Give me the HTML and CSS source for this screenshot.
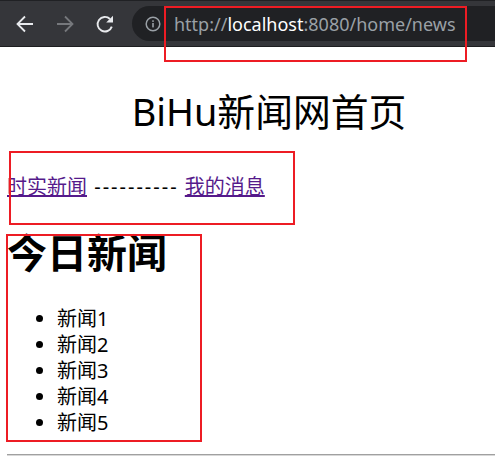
FILE: index.html
```html
<!DOCTYPE html>
<html lang="zh-CN">
<head>
    <meta charset="UTF-8">
    <title>BiHu新闻网首页</title>
    <link rel="stylesheet" href="styles.css">
</head>
<body>
    <div class="toolbar">
        <svg class="nav-icon" viewBox="0 0 20 20" fill="none" stroke="#e8eaed" stroke-width="1.8">
            <path d="M18 10H2.5M10 2.5L2.5 10l7.500 7.500"/>
        </svg>
        <svg class="nav-icon" viewBox="0 0 20 20" fill="none" stroke="#76787c" stroke-width="1.8">
            <path d="M2 10h15.500M10 2.500l7.500 7.500-7.500 7.500"/>
        </svg>
        <svg class="nav-icon" viewBox="0 0 20 20" fill="none" stroke="#e8eaed" stroke-width="1.9">
            <path d="M16.800 12.600A7.300 7.300 0 1 1 15 5"/>
            <path d="M18 1.800v6.800h-6.800z" fill="#e8eaed" stroke="none"/>
        </svg>
        <div class="address">
            <svg class="info-icon" viewBox="0 0 16 16">
                <circle cx="8" cy="8" r="6.800" fill="none" stroke="#9aa0a6" stroke-width="1.500"/>
                <rect x="7.200" y="7" width="1.600" height="4.400" fill="#9aa0a6"/>
                <rect x="7.200" y="4.300" width="1.600" height="1.600" fill="#9aa0a6"/>
            </svg>
            <span class="url">http://<span class="host">localhost</span>:8080/home/news</span>
        </div>
    </div>

    <div class="page">
        <div class="title">BiHu新闻网首页</div>
        <div class="nav">
            <a href="#">时实新闻</a>
            <span class="dashes">----------</span>
            <a href="#">我的消息</a>
        </div>
        <h2>今日新闻</h2>
        <ul>
            <li>新闻1</li>
            <li>新闻2</li>
            <li>新闻3</li>
            <li>新闻4</li>
            <li>新闻5</li>
        </ul>
        <hr>
    </div>

    <!-- red annotation boxes drawn over the screenshot -->
    <div class="mark mark-url"></div>
    <div class="mark mark-nav"></div>
    <div class="mark mark-news"></div>
</body>
</html>
```

FILE: styles.css
```css
html, body {
    height: 100%;
    overflow: hidden;
}

body {
    margin: 0;
    background-color: #ffffff;
    color: #000000;
    font-family: "Noto Sans", "Noto Sans CJK SC", sans-serif;
    position: relative;
}

.toolbar {
    display: flex;
    align-items: center;
    box-sizing: border-box;
    height: 47px;
    padding-left: 15px;
    background-color: #35363a;
    border-top: 1px solid #202124;
    border-bottom: 1px solid #1d1e20;
}

.nav-icon {
    width: 20px;
    height: 20px;
    margin-right: 20px;
    flex-shrink: 0;
}

.address {
    display: flex;
    align-items: center;
    flex: 1;
    height: 35px;
    margin-left: -3px;
    padding-left: 13px;
    background-color: #202124;
    border-radius: 18px 0 0 18px;
}

.info-icon {
    width: 16px;
    height: 16px;
    margin-right: 13px;
}

.url {
    color: #9aa0a6;
    font-size: 18px;
    white-space: nowrap;
}

.host {
    color: #ffffff;
}

.page {
    padding-left: 7px;
}

.title {
    margin-top: 43px;
    padding-left: 36px;
    font-size: 37.8px;
    line-height: 44px;
    text-align: center;
}

.nav {
    margin-top: 40px;
    font-size: 20px;
    line-height: 26px;
}

.nav a {
    color: #551a8b;
}

.dashes {
    margin: 0 1px 0 2px;
    letter-spacing: 2px;
}

h2 {
    margin: 28px 0 0;
    font-size: 40px;
    line-height: 50px;
    font-weight: 700;
}

ul {
    margin: 28px 0 0;
    padding-left: 50px;
    font-size: 20px;
    line-height: 26px;
}

hr {
    margin: 18px 0 0;
    border: none;
    border-top: 1px solid #a0a0a0;
    border-bottom: 1px solid #d8d8d8;
}

.mark {
    position: absolute;
    box-sizing: border-box;
    border: 2px solid #ed1c24;
}

.mark-url {
    left: 164px;
    top: 6px;
    width: 303px;
    height: 56px;
}

.mark-nav {
    left: 9px;
    top: 151px;
    width: 286px;
    height: 74px;
}

.mark-news {
    left: 6px;
    top: 234px;
    width: 196px;
    height: 208px;
}
```
